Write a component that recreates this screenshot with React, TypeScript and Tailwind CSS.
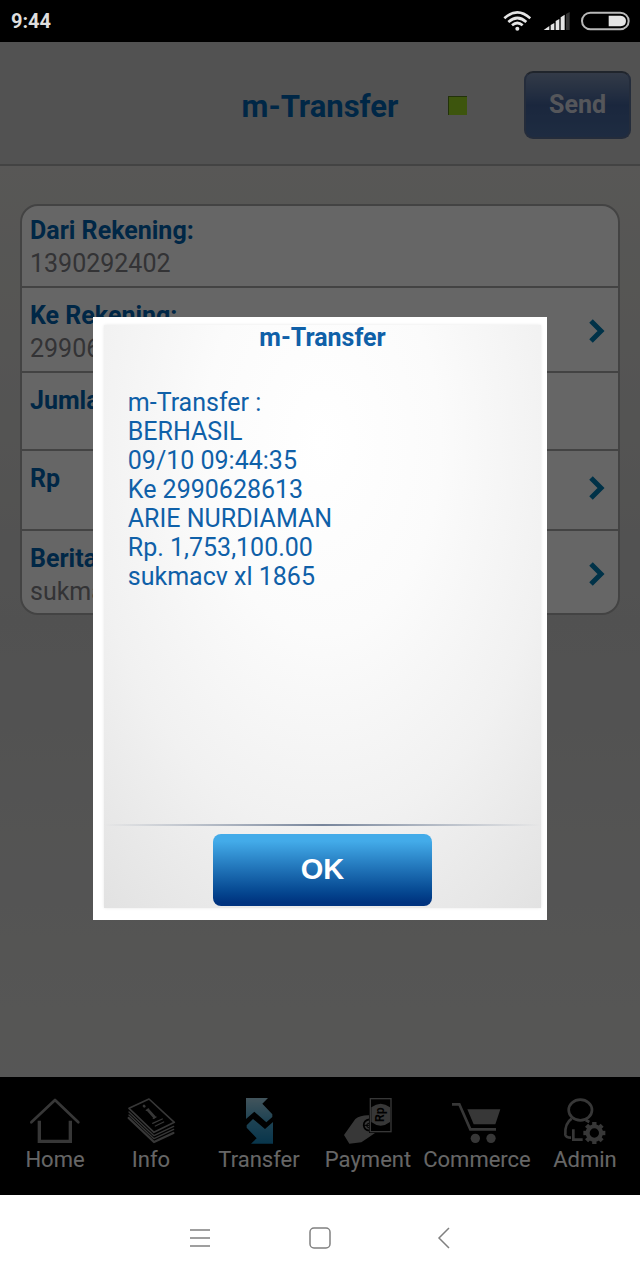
import { ReactNode } from 'react';

interface FormRow {
  label: string;
  value?: string;
  link?: boolean;
  size: string;
}

const rows: FormRow[] = [
  { label: 'Dari Rekening:', value: '1390292402', size: 'min-h-[82px] pt-2' },
  { label: 'Ke Rekening:', value: '2990628613', link: true, size: 'min-h-[85px] pt-[11px]' },
  { label: 'Jumlah', size: 'min-h-[78px] pt-[11px]' },
  { label: 'Rp', link: true, size: 'min-h-[80px] pt-[11px] pb-2' },
  { label: 'Berita', value: 'sukmacv', link: true, size: 'min-h-[82px] pt-[11px]' },
];

const message = [
  'm-Transfer :',
  'BERHASIL',
  '09/10 09:44:35',
  'Ke 2990628613',
  'ARIE NURDIAMAN',
  'Rp. 1,753,100.00',
  'sukmacv xl 1865',
];

function HomeIcon() {
  return (
    <svg viewBox="84 84 162 138" className="h-[46px] w-[54px]" fill="none" stroke="#8a8a8a" strokeLinejoin="round">
      <path d="M94 157 165 90 235 157" strokeWidth="8" strokeLinecap="round" />
      <path d="M118 152V214H211V152" strokeWidth="10" strokeLinejoin="miter" />
    </svg>
  );
}

function InfoIcon() {
  return (
    <svg viewBox="372 84 162 138" className="h-[46px] w-[54px]" fill="none" stroke="#8a8a8a" strokeLinejoin="round" strokeLinecap="round">
      <path d="M447 87 387 115 462 187 523 157Z" strokeWidth="5" />
      <path d="M387 126 462 197 521 169" strokeWidth="4" />
      <path d="M387 135 462 206 521 178" strokeWidth="4" />
      <path d="M386 144 462 216 520 189" strokeWidth="7" />
      <path d="M432 108 433 109" strokeWidth="8" />
      <path d="M444 120 463 141" strokeWidth="8" />
      <path d="M439 121 446 117M460 145 468 141" strokeWidth="4" />
      <path d="M458 160 487 147M466 168 491 156" strokeWidth="4" />
    </svg>
  );
}

function TransferIcon() {
  return (
    <svg viewBox="696 84 162 138" className="h-[46px] w-[54px]">
      <defs>
        <linearGradient id="transfer" x1="0" y1="84" x2="0" y2="222" gradientUnits="userSpaceOnUse">
          <stop offset="0" stopColor="#a6d3e6" />
          <stop offset="0.5" stopColor="#4ba6cf" />
          <stop offset="1" stopColor="#1585bd" />
        </linearGradient>
      </defs>
      <path d="M738 84H804L787 101 817 133V141L799 157 763 125 738 147Z" fill="url(#transfer)" />
      <path d="M819 156V221H753L770 205 740 173V166L759 147 795 177Z" fill="url(#transfer)" />
    </svg>
  );
}

function PaymentIcon() {
  return (
    <svg viewBox="63 84 162 138" className="h-[46px] w-[54px]">
      <path d="M72 195 106 147Q122 135 147 136V189H165Q145 203 124 217L88 221Z" fill="#8a8a8a" />
      <path d="M148 148Q131 151 131 166 133 180 148 182" fill="none" stroke="#000" strokeWidth="5" />
      <path d="M148 159Q140 160 140 167 141 173 148 174M132 166H148" fill="none" stroke="#000" strokeWidth="3" />
      <rect x="151" y="86" width="62" height="99" fill="#000" stroke="#8a8a8a" strokeWidth="4" />
      <path d="M154 112Q168 101 182 101T210 112V156Q196 167 182 167T154 156Z" fill="#8a8a8a" />
      <text
        x="180"
        y="134"
        transform="rotate(-90 180 134)"
        textAnchor="middle"
        dominantBaseline="central"
        fontFamily="Roboto, sans-serif"
        fontWeight="700"
        fontSize="37"
        fill="#000"
      >
        Rp
      </text>
    </svg>
  );
}

function CommerceIcon() {
  return (
    <svg viewBox="390 84 162 138" className="h-[46px] w-[54px]">
      <path d="M396 103H418L451 178H528" fill="none" stroke="#8a8a8a" strokeWidth="8" />
      <path d="M442 118H541L526 163H461Z" fill="#8a8a8a" />
      <circle cx="466" cy="205" r="14" fill="#8a8a8a" />
      <circle cx="513" cy="205" r="14" fill="#8a8a8a" />
    </svg>
  );
}

function AdminIcon() {
  const teeth = [0, 45, 90, 135, 180, 225, 270, 315];

  return (
    <svg viewBox="714 84 162 138" className="h-[46px] w-[54px]" fill="none" stroke="#8a8a8a" strokeWidth="8">
      <ellipse cx="781" cy="120" rx="35" ry="31" />
      <path d="M755 146Q734 160 736 194 738 203 753 203M760 178V209H788M797 150 808 156" />
      <circle cx="823" cy="189" r="20" strokeWidth="12" />
      {teeth.map((angle) => (
        <path key={angle} d="M823 167V156" strokeWidth="13" transform={`rotate(${angle} 823 189)`} />
      ))}
    </svg>
  );
}

const tabs: { label: string; icon: ReactNode }[] = [
  { label: 'Home', icon: <HomeIcon /> },
  { label: 'Info', icon: <InfoIcon /> },
  { label: 'Transfer', icon: <TransferIcon /> },
  { label: 'Payment', icon: <PaymentIcon /> },
  { label: 'Commerce', icon: <CommerceIcon /> },
  { label: 'Admin', icon: <AdminIcon /> },
];

function StatusBar() {
  return (
    <div className="flex h-[42px] items-center bg-black pr-[10px] pl-[11px] text-[#dedede]">
      <span className="flex-1 text-xl leading-6 font-bold">9:44</span>
      <svg viewBox="550 30 84 66" className="mr-3 h-[22px] w-7" fill="none" stroke="#e4e4e4" strokeWidth="8">
        <path d="M554 55Q593 19 632 55" />
        <path d="M566 66Q593 42 620 66" />
        <path d="M577 76Q593 62 609 76" />
        <circle cx="593" cy="86" r="6" fill="#e4e4e4" stroke="none" />
      </svg>
      <svg viewBox="670 36 84 60" className="mr-[9px] h-5 w-7" fill="#e4e4e4">
        <path d="M672 93 689 81V93ZM693 78 704 72V93H693ZM708 66 719 60V93H708ZM723 55 735 47V93H723Z" />
        <path d="M739 45 750 39V93H739Z" fill="#333" />
      </svg>
      <svg viewBox="780 34 150 60" className="h-5 w-[50px]">
        <rect x="786" y="39" width="140" height="50" rx="25" fill="none" stroke="#b9b9b9" strokeWidth="6" />
        <path d="M866 48H902Q918 50 918 64T902 80H866Z" fill="#e4e4e4" />
      </svg>
    </div>
  );
}

function Header() {
  return (
    <header className="grid h-[124px] grid-cols-[1fr_auto_1fr] items-center border-b-2 border-[#a8a8a8] bg-[#cdcdcd] pt-1">
      <h1 className="col-start-2 pt-1 text-[31px] leading-9 font-bold text-[#0063b0]">m-Transfer</h1>
      <div className="flex items-center justify-between pr-[9px] pl-[50px]">
        <span className="size-[19px] border-t border-l border-[#557d1a] bg-[#99d421]" />
        <button className="h-[68px] w-[107px] rounded-[9px] border-2 border-[#5a6e93] border-t-[#525c6e] bg-linear-to-b from-[#8093b3] via-[#43629a] to-[#4c6ea3] text-[25px] font-bold text-[#d4d8e0]">
          Send
        </button>
      </div>
    </header>
  );
}

function Row({ row }: { row: FormRow }) {
  return (
    <li className={`flex border-b-2 border-[#a8a8a8] pr-3 pl-2 last:border-b-0 ${row.size}`}>
      <div className="flex-1 text-[25px] leading-[33px]">
        <p className="font-bold text-[#0063b0]">{row.label}</p>
        {row.value && <p className="text-[#808086]">{row.value}</p>}
      </div>
      {row.link && (
        <button aria-label={row.label} className="self-center pb-2">
          <svg viewBox="0 0 18 24" className="h-6 w-[18px]" fill="none" stroke="#007eb5" strokeWidth="5">
            <path d="M3 2 13 12 3 22" />
          </svg>
        </button>
      )}
    </li>
  );
}

function TabBar() {
  return (
    <nav className="grid grid-cols-[96fr_96fr_120fr_98fr_120fr_96fr] bg-black px-[7px] pt-[21px] pb-[19px]">
      {tabs.map((tab) => (
        <a key={tab.label} href="#" className="flex flex-col items-center text-[22px] leading-8 text-white">
          {tab.icon}
          {tab.label}
        </a>
      ))}
    </nav>
  );
}

function ResultDialog() {
  return (
    <div className="absolute inset-0 flex items-center justify-center bg-black/60">
      <div
        role="dialog"
        aria-labelledby="dialog-title"
        className="w-[71%] bg-white pt-2 pr-[6px] pb-3 pl-[11px] text-[25px] text-[#0f60a8]"
      >
        <div className="flex flex-col items-center bg-[radial-gradient(ellipse_90%_110%_at_50%_20%,#ffffff_0%,#fbfbfb_30%,#f1f1f1_60%,#dedede_100%)] pb-[2px] shadow-[0_0_3px_#e8e8e8]">
          <h2 id="dialog-title" className="leading-[26px] font-bold">
            m-Transfer
          </h2>
          <div className="min-h-[473px] w-full px-6 pt-[37px] leading-[29px]">
            {message.map((line) => (
              <p key={line}>{line}</p>
            ))}
          </div>
          <div className="h-[2px] w-full bg-linear-to-r from-transparent via-[#77859b] to-transparent" />
          <button className="mt-2 h-[72px] w-1/2 rounded-lg bg-linear-to-b from-[#43abe9] from-10% to-[#00337f] to-95% font-[Liberation_Sans,Arial,sans-serif] text-[29px] font-bold text-white">
            OK
          </button>
        </div>
      </div>
    </div>
  );
}

function SystemNav() {
  return (
    <div className="flex h-[85px] items-center justify-center gap-24 bg-white">
      <button aria-label="Menu">
        <svg viewBox="0 0 24 24" className="size-6" stroke="#808080" strokeWidth="1.5">
          <path d="M2 4H22M2 12H22M2 20H22" />
        </svg>
      </button>
      <button aria-label="Home">
        <svg viewBox="0 0 24 24" className="size-6" fill="none" stroke="#808080" strokeWidth="1.5">
          <rect x="2" y="2" width="20" height="20" rx="4" />
        </svg>
      </button>
      <button aria-label="Back">
        <svg viewBox="0 0 24 24" className="size-6" fill="none" stroke="#808080" strokeWidth="1.5">
          <path d="M21 2 11 12 21 22" />
        </svg>
      </button>
    </div>
  );
}

export default function App() {
  return (
    <div className="flex min-h-screen flex-col font-[Roboto,sans-serif]">
      <StatusBar />
      <div className="relative flex flex-1 flex-col bg-[#cccccc]">
        <Header />
        <main className="flex-1 bg-linear-to-b from-[#dbdad6] via-[#cbcbcb] via-50% to-[#d8d8d6] px-5 pt-[38px]">
          <ul className="rounded-[18px] border-2 border-[#a8a8a8] bg-white">
            {rows.map((row) => (
              <Row key={row.label} row={row} />
            ))}
          </ul>
        </main>
        <TabBar />
        <ResultDialog />
      </div>
      <SystemNav />
    </div>
  );
}
